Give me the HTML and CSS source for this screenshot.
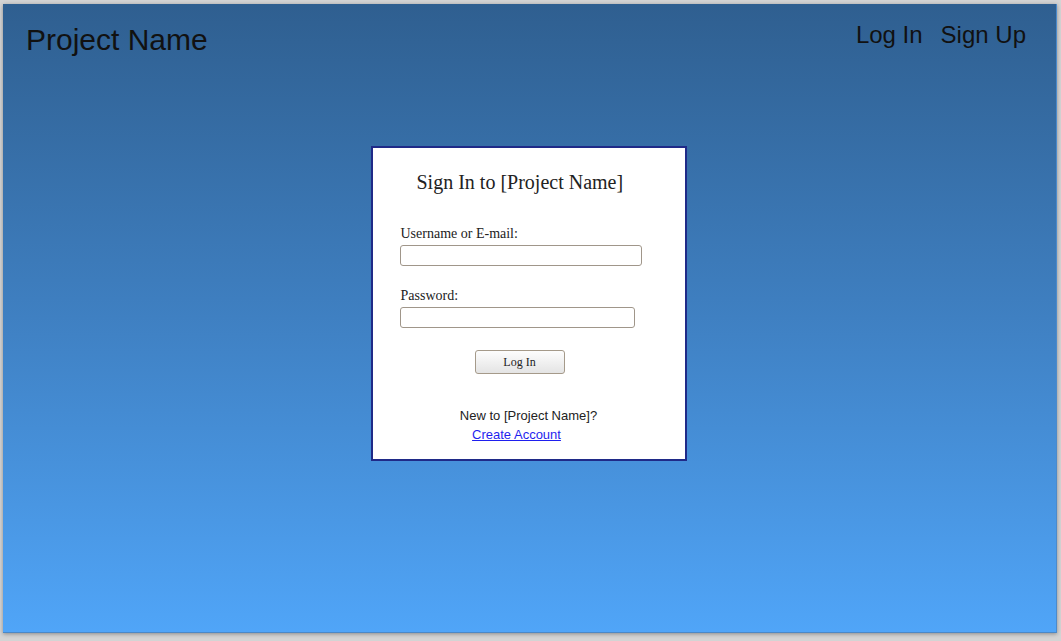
FILE: index.html
```html
<!DOCTYPE html>
<html lang="en">
<head>
<meta charset="utf-8">
<title>Sign In</title>
<link rel="stylesheet" href="styles.css">
</head>
<body>
<div class="frame">
  <header class="topbar">
    <div class="brand">Project Name</div>
    <nav class="nav">
      <a class="nav-link" href="#">Log In</a>
      <a class="nav-link" href="#">Sign Up</a>
    </nav>
  </header>
  <main class="main">
    <form class="card">
      <h1 class="card-title">Sign In to [Project Name]</h1>
      <label class="field-label label-user" for="user">Username or E-mail:</label>
      <input class="field field-user" id="user" type="text">
      <label class="field-label label-pass" for="pass">Password:</label>
      <input class="field field-pass" id="pass" type="password">
      <button class="btn" type="button">Log In</button>
      <div class="signup">
        <div>New to [Project Name]?</div>
        <a class="signup-link" href="#">Create Account</a>
      </div>
    </form>
  </main>
</div>
</body>
</html>
```
FILE: styles.css
```css
html, body {
  margin: 0;
  padding: 0;
}
body {
  background: #d4d4d4;
  height: 641px;
  overflow: hidden;
}
.frame {
  margin: 4px 4px 8px 3px;
  height: 629px;
  background: linear-gradient(to bottom, #2f5f90 0%, #3f80c2 50%, #50a5f8 100%);
  box-shadow: 0 1px 4px rgba(0, 0, 0, 0.35);
  border-right: 1px solid #4b8acb;
  border-bottom: 1px solid #4b88c6;
  box-sizing: border-box;
  font-family: "Liberation Sans", Arial, sans-serif;
}
.topbar {
  display: flex;
  justify-content: space-between;
  align-items: flex-start;
  padding: 19px 30px 0 23px;
}
.brand {
  font-size: 30px;
  line-height: 34px;
  color: #111;
}
.nav {
  display: flex;
  gap: 18px;
}
.nav-link {
  font-size: 24px;
  line-height: 24px;
  color: #111;
  text-decoration: none;
}
.main {
  padding-right: 2px;
}
.card {
  margin: 89px auto 0;
  background: #fff;
  border: 2px solid #1f2a88;
  padding: 0 28px 15px;
  box-sizing: border-box;
  width: 316px;
  font-family: "Liberation Serif", "Times New Roman", serif;
  color: #222;
}
.card-title {
  margin: 23px 0 0;
  padding-left: 16px;
  font-size: 20px;
  line-height: 23px;
  font-weight: normal;
}
.field-label {
  display: block;
  font-size: 14px;
  line-height: 16px;
}
.label-user {
  margin-top: 32px;
}
.label-pass {
  margin-top: 22px;
}
.field {
  display: block;
  margin: 3px 0 0 -1px;
  height: 21px;
  box-sizing: border-box;
  border: 1px solid #a0968a;
  border-radius: 3px;
  background: #fff;
  padding: 0 4px;
}
.field-user {
  width: 242px;
}
.field-pass {
  width: 235px;
}
.btn {
  display: block;
  margin: 22px 0 0 74px;
  width: 90px;
  height: 24px;
  box-sizing: border-box;
  border: 1px solid #a59a8a;
  border-radius: 3px;
  background: linear-gradient(to bottom, #fdfdfd, #e4e4e4);
  font-family: "Liberation Serif", "Times New Roman", serif;
  font-size: 12px;
  color: #222;
  padding: 0;
}
.signup {
  margin-top: 32px;
  text-align: center;
  font-family: "Liberation Sans", Arial, sans-serif;
  font-size: 13px;
  line-height: 19px;
  color: #222;
}
.signup-link {
  display: inline-block;
  margin-right: 24px;
  color: #1f1fee;
}
```
